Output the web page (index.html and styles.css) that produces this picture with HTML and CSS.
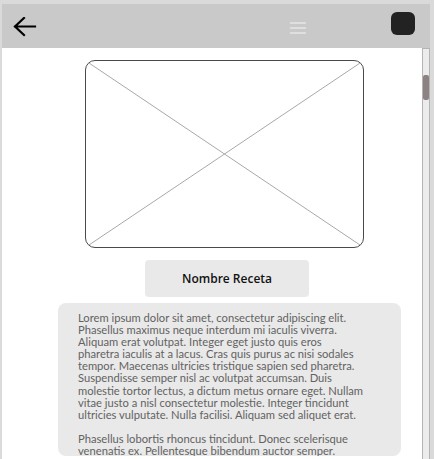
FILE: index.html
```html
<!DOCTYPE html>
<html lang="es">
<head>
<meta charset="utf-8">
<title>Receta</title>
<link rel="stylesheet" href="styles.css">
</head>
<body>
<div class="frame">
  <header class="topbar">
    <svg class="back" width="24" height="20" viewBox="0 0 24 20" aria-hidden="true">
      <path d="M2 9.5H22 M11 1L2 9.5L11 18" fill="none" stroke="#000" stroke-width="2.2" stroke-linecap="square" stroke-linejoin="miter"/>
    </svg>
    <div class="menu"><span></span><span></span><span></span></div>
    <div class="avatar"></div>
  </header>
  <div class="body-row">
    <main class="content">
      <div class="photo">
        <svg width="100%" height="100%" viewBox="0 0 100 100" preserveAspectRatio="none" aria-hidden="true">
          <line x1="0" y1="0" x2="100" y2="100" stroke="#a8a8a8" stroke-width="1" vector-effect="non-scaling-stroke"/>
          <line x1="100" y1="0" x2="0" y2="100" stroke="#a8a8a8" stroke-width="1" vector-effect="non-scaling-stroke"/>
        </svg>
      </div>
      <div class="name-btn">Nombre Receta</div>
      <div class="desc">
        <p>Lorem ipsum dolor sit amet, consectetur adipiscing elit.<br>Phasellus maximus neque interdum mi iaculis viverra.<br>Aliquam erat volutpat. Integer eget justo quis eros<br>pharetra iaculis at a lacus. Cras quis purus ac nisi sodales<br>tempor. Maecenas ultricies tristique sapien sed pharetra.<br>Suspendisse semper nisl ac volutpat accumsan. Duis<br>molestie tortor lectus, a dictum metus ornare eget. Nullam<br>vitae justo a nisl consectetur molestie. Integer tincidunt<br>ultricies vulputate. Nulla facilisi. Aliquam sed aliquet erat.</p>
        <p>Phasellus lobortis rhoncus tincidunt. Donec scelerisque<br>venenatis ex. Pellentesque bibendum auctor semper.</p>
      </div>
    </main>
    <div class="scrollbar"><div class="thumb"></div></div>
  </div>
</div>
</body>
</html>
```
FILE: styles.css
```css
html, body {
  margin: 0;
  height: 100%;
}
body {
  background: #dadada;
  font-family: Lato, "Open Sans", sans-serif;
  overflow: hidden;
}
.frame {
  height: 100%;
  box-sizing: border-box;
  padding: 4px 4px 0 2px;
  display: flex;
  flex-direction: column;
}
.topbar {
  height: 44px;
  flex: none;
  background: #c9c9c9;
  display: flex;
  align-items: center;
  padding: 0 15px 0 11px;
}
.back {
  display: block;
  margin-top: 1px;
}
.menu {
  margin-left: auto;
  margin-top: 3px;
  width: 16px;
  display: flex;
  flex-direction: column;
  gap: 3px;
}
.menu span {
  display: block;
  height: 2px;
  background: #dfdfdf;
}
.avatar {
  margin-left: 85px;
  margin-top: -5px;
  width: 24px;
  height: 23px;
  border-radius: 6px;
  background: #222;
}
.body-row {
  flex: 1;
  display: flex;
  min-height: 0;
}
.content {
  flex: 1;
  background: #fff;
  overflow: hidden;
  display: flex;
  flex-direction: column;
  align-items: flex-start;
}
.photo {
  margin: 12px 0 0 83px;
  width: 277px;
  height: 186px;
  border: 1px solid #4a4a4a;
  border-radius: 10px;
  overflow: hidden;
  flex: none;
}
.photo svg {
  display: block;
}
.name-btn {
  margin: 12px 0 0 143px;
  width: 164px;
  height: 37px;
  background: #e9e9e9;
  border-radius: 4px;
  display: flex;
  align-items: center;
  justify-content: center;
  font-family: "Open Sans", sans-serif;
  font-weight: 600;
  font-size: 12px;
  color: #111;
  flex: none;
}
.desc {
  margin: 6px 0 0 56px;
  width: 343px;
  height: 153px;
  box-sizing: border-box;
  padding: 9px 0 0 20px;
  background: #e9e9e9;
  border-radius: 8px;
  overflow: hidden;
  flex: none;
  color: #626262;
  font-size: 11.2px;
  line-height: 12.1px;
  white-space: nowrap;
}
.desc p {
  margin: 0 0 12px;
}
.scrollbar {
  width: 8px;
  flex: none;
  box-sizing: border-box;
  border: 1px solid #b4b4b4;
  border-bottom: none;
  background: #ececec;
  padding-top: 26px;
}
.thumb {
  height: 25px;
  background: #8c8282;
  border-radius: 2px;
}
```
